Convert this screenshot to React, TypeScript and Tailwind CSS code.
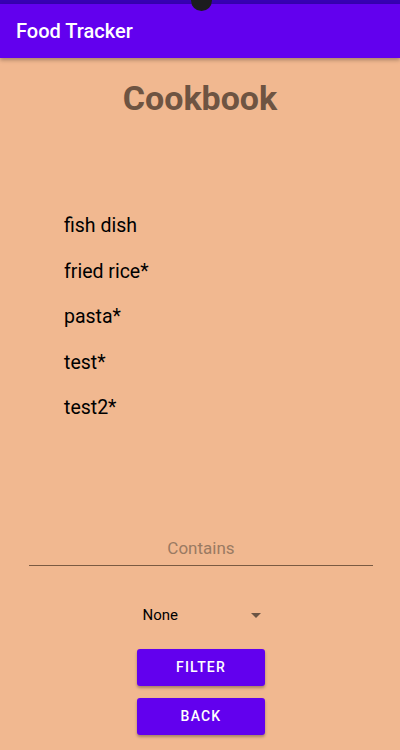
import { useState } from "react";

const recipes = ["fish dish", "fried rice*", "pasta*", "test*", "test2*"];

export default function App() {
  const [query, setQuery] = useState("");

  return (
    <div
      className="flex h-[750px] w-[400px] flex-col overflow-hidden bg-[#f1b890]"
      style={{ fontFamily: "Roboto, 'Liberation Sans', sans-serif" }}
    >
      <div className="relative h-[4px] bg-[#3700b3]">
        <div className="absolute left-[191px] top-[-10px] z-20 size-[21px] rounded-full bg-[#1c1c1e]"></div>
      </div>
      <div className="z-10 flex h-[54px] items-center bg-[#6200ee] px-4 shadow-[0_2px_4px_rgba(0,0,0,0.3)]">
        <p className="text-[20px] font-medium text-white">Food Tracker</p>
      </div>

      <h1 className="mt-[20px] text-center text-[34px] font-bold leading-[40px] text-[#6e5442]">
        Cookbook
      </h1>

      <div className="mt-[97px] flex flex-col gap-[24px] pl-[64px]">
        {recipes.map((r) => (
          <p key={r} className="text-[19.5px] leading-[21.5px] text-black">
            {r}
          </p>
        ))}
      </div>

      <div className="ml-[29px] mr-[27px] mt-[113px] border-b border-[#7a5a42]">
        <input
          className="h-[33px] w-full bg-transparent text-center text-[17px] text-black outline-none placeholder:text-[#9a7a62]"
          placeholder="Contains"
          value={query}
          onChange={(e) => setQuery(e.target.value)}
        />
      </div>

      <div className="ml-[1px] mt-[38px] flex h-[24px] w-[120px] items-center justify-between self-center pl-[2px]">
        <span className="text-[15px] text-black">None</span>
        <svg width="10" height="5" viewBox="0 0 10 5">
          <path d="M0 0 L10 0 L5 5 Z" fill="#6b5444" />
        </svg>
      </div>

      <div className="ml-[2px] mt-[21px] flex flex-col items-center gap-[12px]">
        <button className="h-[37px] w-[128px] rounded-[3px] bg-[#6200ee] text-[14px] font-medium tracking-[1.2px] text-white shadow-[0_2px_3px_rgba(0,0,0,0.3)]">
          FILTER
        </button>
        <button className="h-[37px] w-[128px] rounded-[3px] bg-[#6200ee] text-[14px] font-medium tracking-[1.2px] text-white shadow-[0_2px_3px_rgba(0,0,0,0.3)]">
          BACK
        </button>
      </div>
    </div>
  );
}
